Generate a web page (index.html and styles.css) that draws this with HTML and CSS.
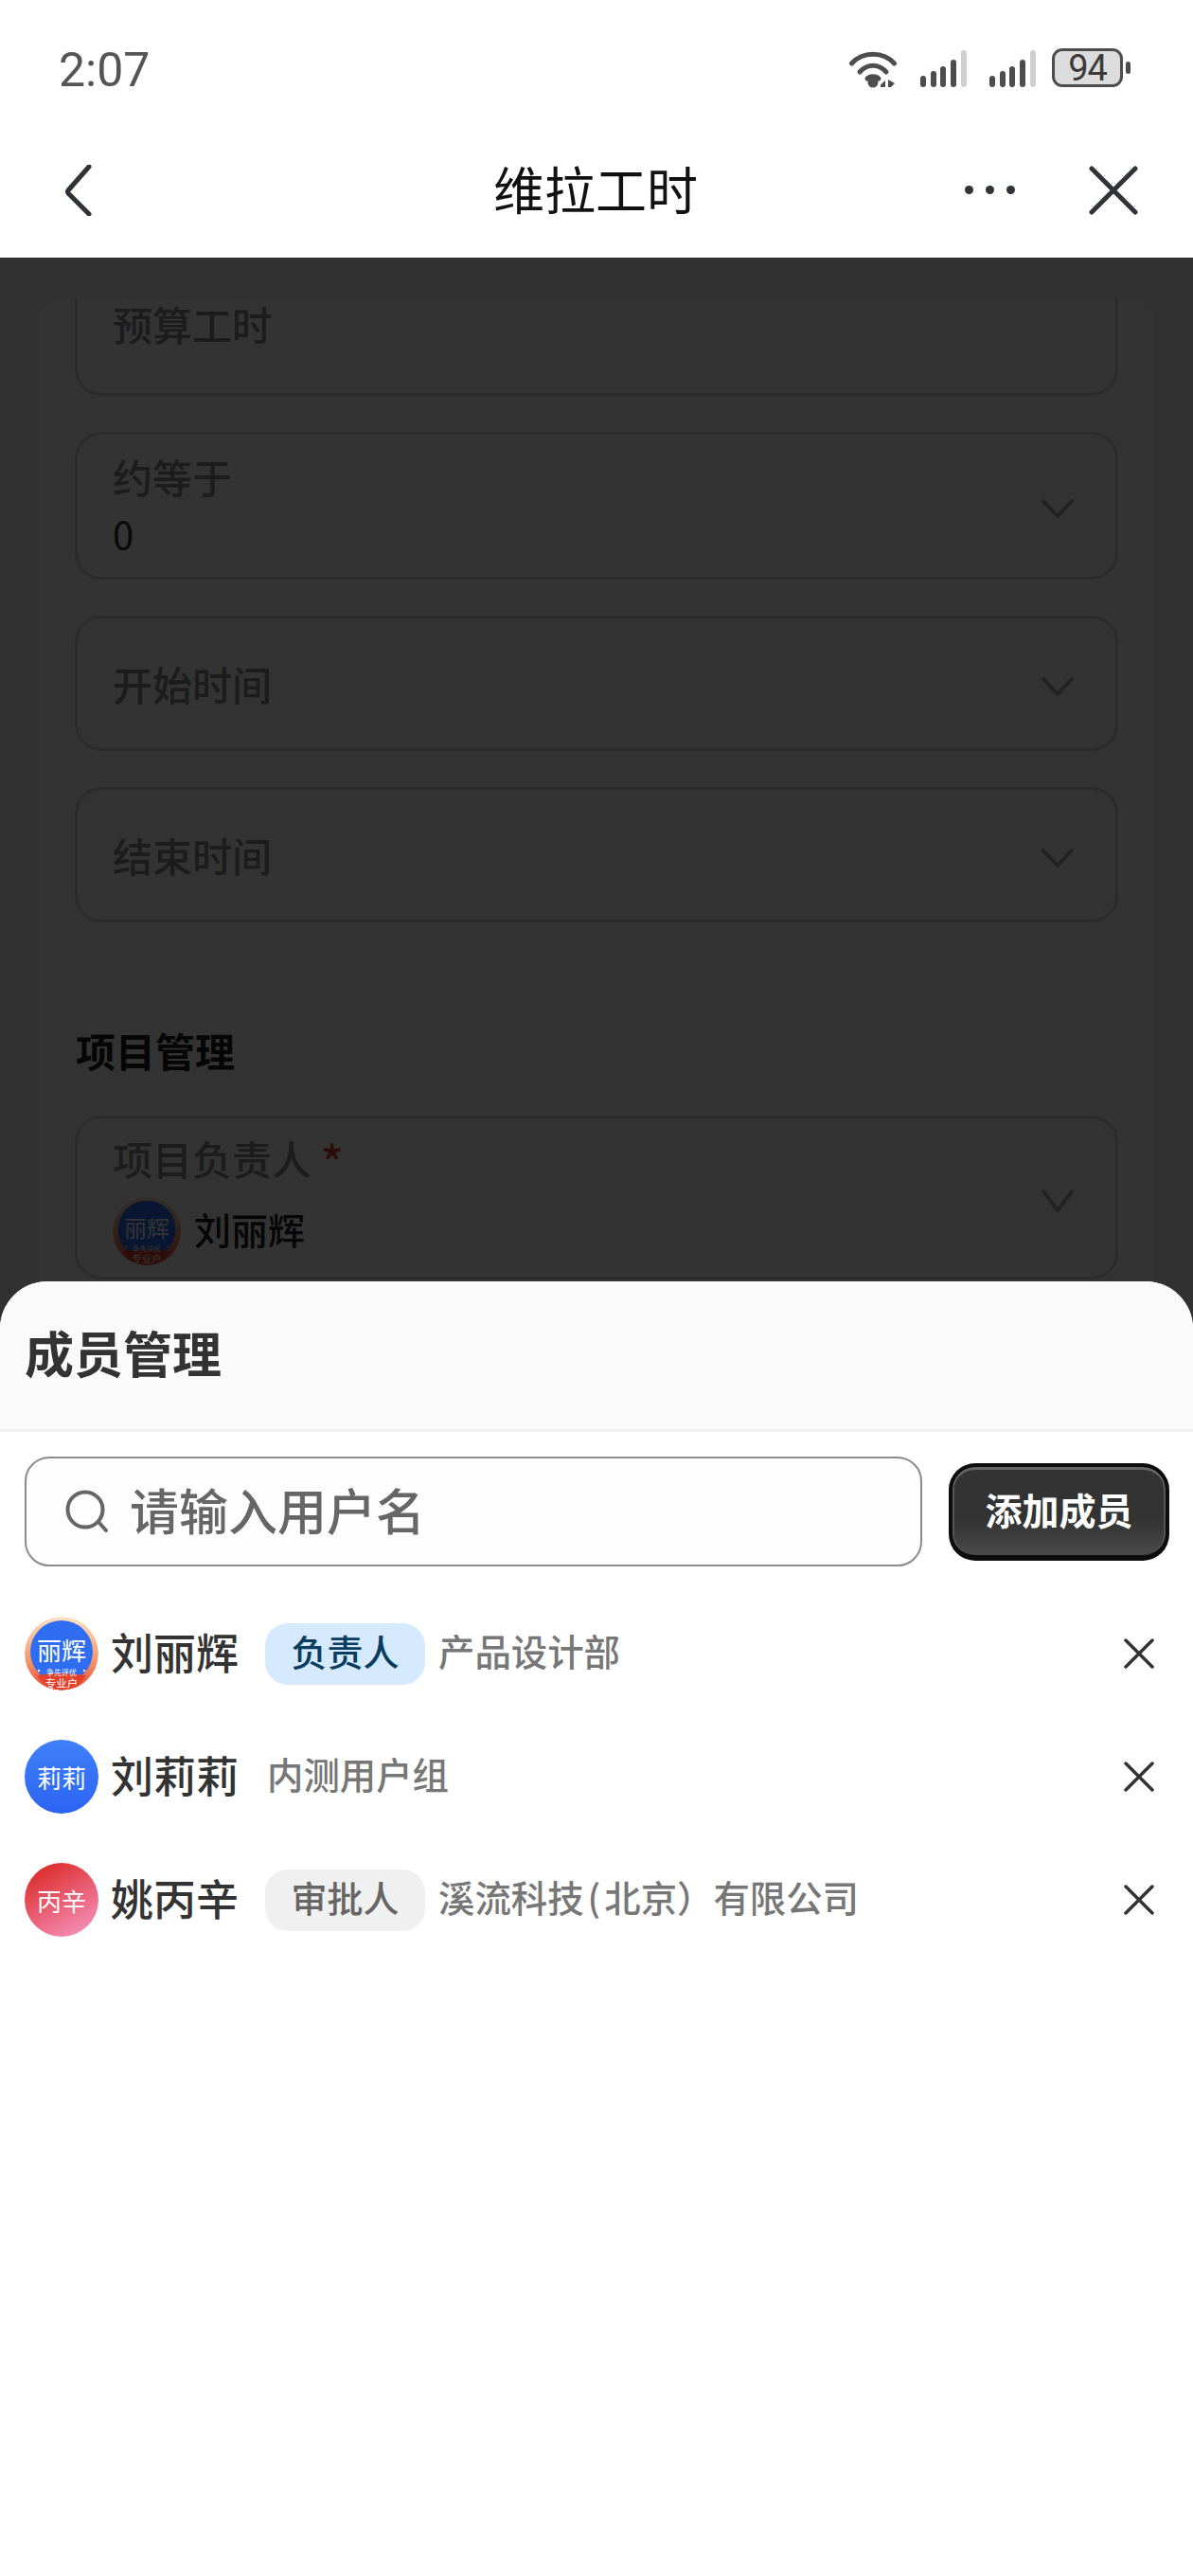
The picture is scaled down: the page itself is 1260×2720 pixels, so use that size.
FILE: index.html
```html
<!DOCTYPE html>
<html lang="zh-CN">
<head>
    <meta charset="UTF-8">
    <meta name="viewport" content="width=device-width, initial-scale=1.0">
    <title>维拉工时</title>
    <link rel="stylesheet" href="styles.css">
</head>
<body>
<div class="page">
    <div class="status-bar">
        <span class="clock">2:07</span>
        <div class="status-icons">
            <svg class="wifi" width="50" height="40" viewBox="0 0 50 40">
                <path d="M2.5 14 C14 1 36 1 47.5 14" />
                <path d="M11 23 C19 14 31 14 39 23" />
                <path d="M19 30 C22 27 28 27 31 30" />
                <circle class="fill" cx="25" cy="34" r="5.5" />
                <path class="fill" d="M38 39 L38 32 L33 36.5 L33 39 Z M41 31 L41 39 L44 39 L48 35 L41 31 Z" />
            </svg>
            <svg class="signal" width="51" height="40" viewBox="0 0 51 40">
                <rect x="0" y="27" width="6" height="12" rx="3" />
                <rect x="11" y="22" width="6" height="17" rx="3" />
                <rect x="21" y="17" width="6" height="22" rx="3" />
                <rect x="32" y="10" width="6" height="29" rx="3" />
                <rect class="off" x="43" y="0" width="6" height="39" rx="3" />
            </svg>
            <svg class="signal" width="51" height="40" viewBox="0 0 51 40">
                <rect x="0" y="27" width="6" height="12" rx="3" />
                <rect x="11" y="22" width="6" height="17" rx="3" />
                <rect x="21" y="17" width="6" height="22" rx="3" />
                <rect x="32" y="10" width="6" height="29" rx="3" />
                <rect class="off" x="43" y="0" width="6" height="39" rx="3" />
            </svg>
            <div class="battery">
                <div class="battery-body">94</div>
                <div class="battery-tip"></div>
            </div>
        </div>
    </div>

    <div class="nav-bar">
        <svg class="nav-back" width="28" height="54" viewBox="0 0 28 54">
            <path d="M25 2 L3 27 Q2 28 3 30 L25 52" />
        </svg>
        <div class="nav-title">维拉工时</div>
        <div class="nav-more"><i></i><i></i><i></i></div>
        <svg class="nav-close" width="52" height="52" viewBox="0 0 52 52">
            <path d="M3 3 L49 49 M49 3 L3 49" />
        </svg>
    </div>

    <div class="form-area">
        <div class="form-card">
            <div class="field field-first">
                <div class="field-label">预算工时</div>
            </div>
            <div class="field field-value">
                <div class="field-stack">
                    <div class="field-label">约等于</div>
                    <div class="field-text">0</div>
                </div>
                <svg class="chevron" width="36" height="22" viewBox="0 0 36 22"><path d="M3 3 L18 19 L33 3" /></svg>
            </div>
            <div class="field field-empty">
                <div class="field-label">开始时间</div>
                <svg class="chevron" width="36" height="22" viewBox="0 0 36 22"><path d="M3 3 L18 19 L33 3" /></svg>
            </div>
            <div class="field field-empty">
                <div class="field-label">结束时间</div>
                <svg class="chevron" width="36" height="22" viewBox="0 0 36 22"><path d="M3 3 L18 19 L33 3" /></svg>
            </div>

            <div class="section-title">项目管理</div>

            <div class="field field-owner">
                <div>
                    <div class="field-label">项目负责人 <span class="required">*</span></div>
                    <div class="owner">
                        <svg class="avatar-small" width="72" height="72" viewBox="0 0 78 78">
                            <defs>
                                <linearGradient id="ringA" x1="0" y1="0" x2="0" y2="1">
                                    <stop offset="0" stop-color="#fde3c4" />
                                    <stop offset="0.6" stop-color="#f4976a" />
                                    <stop offset="1" stop-color="#e8452f" />
                                </linearGradient>
                            </defs>
                            <circle cx="39" cy="39" r="39" fill="url(#ringA)" />
                            <circle cx="39" cy="37" r="33" fill="#2f6ef2" />
                            <path d="M13 62 Q39 58 65 62 Q56 77 39 77 Q22 77 13 62 Z" fill="#e5402c" />
                            <circle cx="15" cy="57" r="1.2" fill="#ffe6d8" />
                            <circle cx="63" cy="57" r="1.2" fill="#ffe6d8" />
                            <text class="avatar-mark"><tspan x="39" y="46" font-size="26">丽辉</tspan><tspan x="39" y="62" font-size="8">争先评优</tspan><tspan x="39" y="75" font-size="11.5">专业户</tspan></text>
                        </svg>
                        <span class="owner-name">刘丽辉</span>
                    </div>
                </div>
                <svg class="chevron" width="36" height="26" viewBox="0 0 36 26"><path d="M3 3 L18 23 L33 3" /></svg>
            </div>
        </div>
    </div>

    <div class="mask"></div>

    <div class="sheet">
        <div class="sheet-head">成员管理</div>
        <div class="search-row">
            <div class="search-box">
                <svg width="46" height="46" viewBox="0 0 46 46">
                    <circle cx="21" cy="21" r="18.5" />
                    <path d="M35 34 L43 43" />
                </svg>
                <span>请输入用户名</span>
            </div>
            <button class="add-btn">添加成员</button>
        </div>
        <div class="members">
            <div class="member">
                <svg class="member-avatar" width="78" height="78" viewBox="0 0 78 78">
                    <defs>
                        <linearGradient id="ringB" x1="0" y1="0" x2="0" y2="1">
                            <stop offset="0" stop-color="#fde3c4" />
                            <stop offset="0.6" stop-color="#f4976a" />
                            <stop offset="1" stop-color="#e8452f" />
                        </linearGradient>
                    </defs>
                    <circle cx="39" cy="39" r="39" fill="url(#ringB)" />
                    <circle cx="39" cy="37" r="33" fill="#2f6ef2" />
                    <path d="M13 62 Q39 58 65 62 Q56 77 39 77 Q22 77 13 62 Z" fill="#e5402c" />
                    <circle cx="15" cy="57" r="1.2" fill="#ffe6d8" />
                    <circle cx="63" cy="57" r="1.2" fill="#ffe6d8" />
                    <text class="avatar-mark"><tspan x="39" y="46" font-size="26">丽辉</tspan><tspan x="39" y="62" font-size="8">争先评优</tspan><tspan x="39" y="75" font-size="11.5">专业户</tspan></text>
                </svg>
                <span class="member-name">刘丽辉</span>
                <span class="tag tag-blue">负责人</span>
                <span class="dept">产品设计部</span>
                <svg class="remove" width="32" height="32" viewBox="0 0 32 32"><path d="M2 2 L30 30 M30 2 L2 30" /></svg>
            </div>
            <div class="member">
                <div class="member-avatar avatar-blue">莉莉</div>
                <span class="member-name">刘莉莉</span>
                <span class="dept dept-solo">内测用户组</span>
                <svg class="remove" width="32" height="32" viewBox="0 0 32 32"><path d="M2 2 L30 30 M30 2 L2 30" /></svg>
            </div>
            <div class="member">
                <div class="member-avatar avatar-red">丙辛</div>
                <span class="member-name">姚丙辛</span>
                <span class="tag tag-grey">审批人</span>
                <span class="dept">溪流科技<span class="paren">(</span>北京）有限公司</span>
                <svg class="remove" width="32" height="32" viewBox="0 0 32 32"><path d="M2 2 L30 30 M30 2 L2 30" /></svg>
            </div>
        </div>
    </div>
</div>
</body>
</html>
```

FILE: styles.css
```css
* {
    box-sizing: border-box;
}
body {
    margin: 0;
    background: #fff;
    font-family: "Noto Sans CJK SC", "Noto Sans", sans-serif;
    color: #333;
}
.page {
    position: relative;
    width: 1260px;
    height: 2720px;
    overflow: hidden;
    display: flex;
    flex-direction: column;
}

/* status bar */
.status-bar {
    height: 145px;
    padding: 53px 66px 0 62px;
    display: flex;
    justify-content: space-between;
    flex-shrink: 0;
}
.clock {
    font-family: Roboto, sans-serif;
    font-size: 50px;
    line-height: 42px;
    color: #555;
}
.status-icons {
    display: flex;
    align-items: flex-start;
}
.wifi {
    margin-right: 25px;
}
.wifi path {
    fill: none;
    stroke: #4d4d4d;
    stroke-width: 5;
    stroke-linecap: round;
}
.wifi .fill, .wifi circle {
    fill: #4d4d4d;
    stroke: none;
}
.signal {
    margin-right: 22px;
    fill: #4d4d4d;
}
.signal + .signal {
    margin-right: 15px;
}
.signal .off {
    fill: #cfcfcf;
}
.battery {
    display: flex;
    align-items: center;
    margin-top: -2px;
}
.battery-body {
    width: 75px;
    height: 41px;
    border: 3px solid #4d4d4d;
    border-radius: 11px;
    background: #dcdcdc;
    font-family: Roboto, sans-serif;
    font-size: 38px;
    line-height: 37px;
    letter-spacing: -1px;
    text-align: center;
    color: #3a3a3a;
}
.battery-tip {
    width: 5px;
    height: 13px;
    margin-left: 3px;
    border-radius: 3px;
    background: #4d4d4d;
}

/* nav bar */
.nav-bar {
    position: relative;
    height: 127px;
    flex-shrink: 0;
    display: flex;
    align-items: center;
    padding: 0 58px 16px 69px;
}
.nav-back path, .nav-close path {
    fill: none;
    stroke: #2f3338;
    stroke-width: 5;
    stroke-linecap: round;
    stroke-linejoin: round;
}
.nav-title {
    flex: 1;
    text-align: center;
    font-size: 54px;
    line-height: 70px;
    color: #111;
    padding-left: 142px;
    padding-bottom: 4px;
}
.nav-more {
    display: flex;
    gap: 13px;
    margin-right: 78px;
}
.nav-more i {
    width: 9px;
    height: 9px;
    border-radius: 50%;
    background: #2f3338;
}

/* form under the mask */
.form-area {
    flex: 1;
    background: #f5f5f5;
    padding: 44px 42px 0;
}
.form-card {
    background: #fff;
    border-radius: 20px;
    padding: 0 37px;
    height: 1200px;
}
.field {
    border: 3px solid #d4d4d4;
    border-radius: 28px;
    padding: 0 36px 0 37px;
    margin-bottom: 38px;
    display: flex;
    justify-content: space-between;
    align-items: center;
}
/* scrolled under the card's top edge, only its lower part shows */
.field-first {
    height: 102px;
    border-top: 0;
    border-radius: 0 0 28px 28px;
    align-items: flex-start;
}
.field-first .field-label {
    margin-top: -4px;
}
.field-value {
    height: 156px;
}
.field-empty {
    height: 143px;
}
.field-owner {
    height: 173px;
    margin-bottom: 0;
}
.field-stack {
    margin-bottom: 10px;
}
.field-label {
    font-size: 42px;
    font-weight: 500;
    line-height: 60px;
    color: #8c8c8c;
}
.field-text {
    font-size: 40px;
    line-height: 44px;
    margin-top: 8px;
    color: #333;
}
.chevron {
    margin-right: 7px;
    margin-top: 6px;
    flex-shrink: 0;
}
.chevron path {
    fill: none;
    stroke: #aaa;
    stroke-width: 4;
    stroke-linecap: round;
    stroke-linejoin: round;
}
.section-title {
    margin-top: 105px;
    margin-bottom: 39px;
    margin-left: 1px;
    font-size: 42px;
    line-height: 60px;
    font-weight: 700;
    color: #222;
}
.required {
    font-size: 50px;
    line-height: 0;
    vertical-align: -6px;
    color: #d9402c;
}
.owner {
    display: flex;
    align-items: center;
    gap: 14px;
    margin-top: 11px;
}
.owner-name {
    font-size: 39px;
    font-weight: 500;
    line-height: 50px;
    padding-bottom: 6px;
    color: #222;
}

/* dark layer */
.mask {
    position: absolute;
    left: 0;
    right: 0;
    top: 272px;
    bottom: 0;
    background: rgba(0, 0, 0, 0.8);
}

/* bottom sheet */
.sheet {
    position: absolute;
    left: 0;
    right: 0;
    top: 1353px;
    bottom: 0;
    background: #fff;
    border-radius: 50px 50px 0 0;
}
.sheet-head {
    height: 159px;
    padding: 0 26px 8px;
    display: flex;
    align-items: center;
    background: #fafafa;
    border-bottom: 3px solid #f0f0f0;
    border-radius: 50px 50px 0 0;
    font-size: 52px;
    font-weight: 700;
    color: #333;
}
.search-row {
    display: flex;
    align-items: center;
    padding: 26px 25px 0 26px;
    gap: 28px;
}
.search-box {
    width: 948px;
    height: 116px;
    border: 2px solid #8c8c8c;
    border-radius: 26px;
    background: #fdfdfd;
    display: flex;
    align-items: center;
    padding-left: 41px;
    gap: 22px;
    font-size: 52px;
    font-weight: 500;
    color: #666;
}
.search-box span {
    padding-bottom: 6px;
}
.search-box svg {
    flex-shrink: 0;
}
.search-box circle, .search-box path {
    fill: none;
    stroke: #666;
    stroke-width: 4;
    stroke-linecap: round;
}
.add-btn {
    width: 233px;
    height: 103px;
    padding: 0 0 5px;
    border: 4px solid #0d0d0d;
    border-bottom-width: 6px;
    border-radius: 28px;
    background: linear-gradient(#333 60%, #4a4a4a);
    box-shadow: inset 0 3px 0 #666, inset 2px 0 0 #555, inset -2px 0 0 #555;
    color: #fff;
    font-family: inherit;
    font-size: 39px;
    font-weight: 700;
}
.members {
    padding-top: 27px;
}
.member {
    height: 130px;
    padding: 0 41px 0 26px;
    display: flex;
    align-items: center;
}
.member-avatar {
    width: 78px;
    height: 78px;
    flex-shrink: 0;
    border-radius: 50%;
    display: flex;
    align-items: center;
    justify-content: center;
    color: #fff;
    font-size: 26px;
}
.avatar-mark {
    fill: #fff;
    text-anchor: middle;
}
.avatar-blue {
    background: linear-gradient(#4080fb, #2b64f2);
}
.avatar-red {
    background: linear-gradient(150deg, #dd3232 15%, #ee6f8c 65%, #f59bc6);
}
.member-name {
    width: 135px;
    margin-left: 13px;
    padding-bottom: 5px;
    font-size: 45px;
    font-weight: 500;
    white-space: nowrap;
    color: #333;
}
.tag {
    width: 169px;
    height: 65px;
    margin-left: 28px;
    padding-bottom: 8px;
    border-radius: 24px;
    display: flex;
    align-items: center;
    justify-content: center;
    font-size: 38px;
    font-weight: 500;
}
.tag-blue {
    background: #d5eaff;
    color: #0b3d5e;
}
.tag-grey {
    background: #f0f0f0;
    color: #666;
}
.dept {
    margin-left: 14px;
    padding-bottom: 8px;
    font-size: 38.4px;
    font-weight: 500;
    white-space: nowrap;
    color: #777;
}
.dept-solo {
    margin-left: 30px;
}
.paren {
    margin: 0 4px;
}
.remove {
    margin-left: auto;
    flex-shrink: 0;
}
.remove path {
    fill: none;
    stroke: #333;
    stroke-width: 3.5;
    stroke-linecap: round;
}
```
